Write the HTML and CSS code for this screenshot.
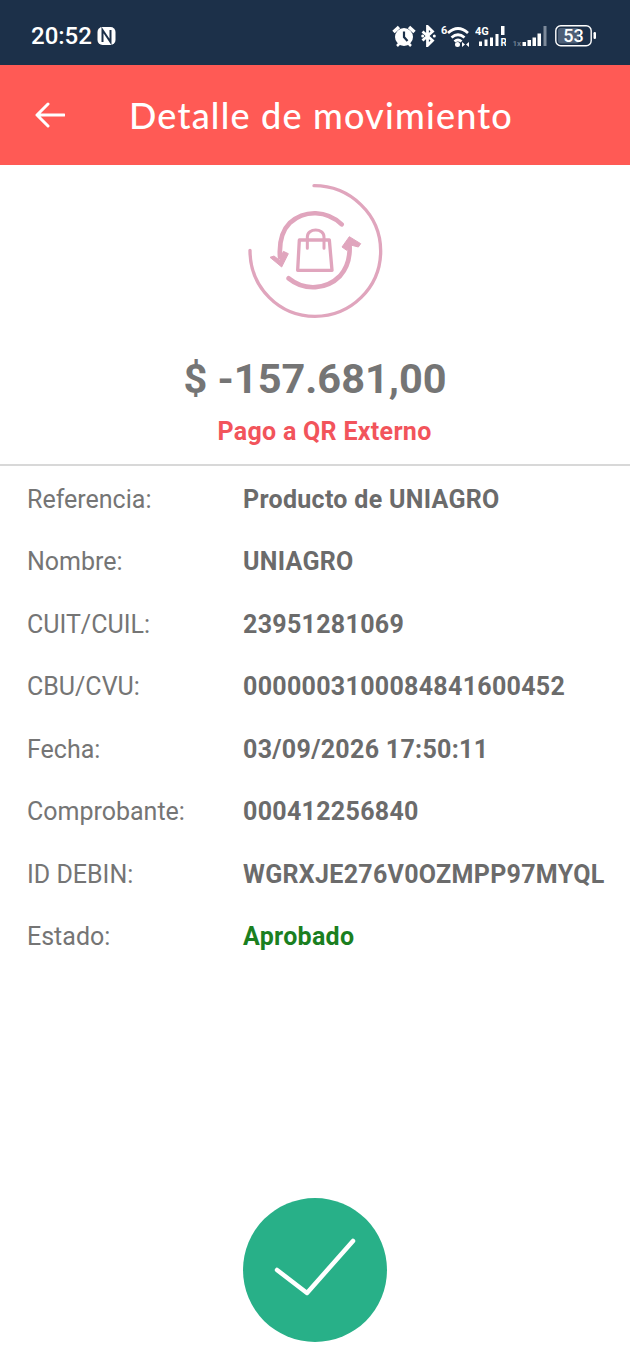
FILE: index.html
```html
<!DOCTYPE html>
<html lang="es">
<head>
  <meta charset="UTF-8">
  <meta name="viewport" content="width=device-width, initial-scale=1.0">
  <title>Detalle de movimiento</title>
  <link rel="stylesheet" href="styles.css">
</head>
<body>
  <div class="screen">
    <!-- Barra de estado -->
    <div class="status-bar">
      <div class="status-left">
        <span class="clock">20:52</span>
        <svg class="nfc" width="19" height="20" viewBox="0 0 19 20">
          <rect x="0.500" y="1" width="18" height="18" rx="5" fill="#fff"/>
          <path d="M5.500 16V4l8 12V4" fill="none" stroke="#1c3049" stroke-width="2"/>
        </svg>
      </div>
      <div class="status-right">
        <svg class="st-alarm" width="24" height="22" viewBox="0 0 24 22">
          <circle cx="12" cy="12" r="9" fill="#fff"/>
          <path d="M12 6.500V12l3.500 4" fill="none" stroke="#1c3049" stroke-width="2.200"/>
          <path d="M1.500 7l5.500-5M22.500 7l-5.500-5" stroke="#fff" stroke-width="3.500" fill="none"/>
          <path d="M5 21l2.500-2.500M19 21l-2.500-2.500" stroke="#fff" stroke-width="2.500" fill="none"/>
        </svg>
        <svg class="st-bt" width="15" height="22" viewBox="0 0 15 22">
          <path d="M1.500 6.500l10 9-5 5V1.500l5 5-10 9" fill="none" stroke="#fff" stroke-width="2.800"/>
          <circle cx="13.300" cy="11" r="1.500" fill="#fff"/>
          <circle cx="1.700" cy="11" r="1.500" fill="#fff"/>
        </svg>
        <svg class="st-wifi" width="29" height="22" viewBox="0 0 29 22">
          <text x="0" y="9" class="mini">6</text>
          <path d="M7 8q10-9 20 0M10.500 12.500q6.500-5.500 13 0M13.500 16.500q3.500-3 7 0" fill="none" stroke="#fff" stroke-width="2.800"/>
          <circle cx="16.500" cy="19.500" r="2.500" fill="#fff"/>
          <path d="M21 17l3 2.500-3 2.500zM28 17l-3 2.500 3 2.500z" fill="#fff"/>
        </svg>
        <svg class="st-4g" width="31" height="22" viewBox="0 0 31 22">
          <text x="0" y="10" class="mini">4G</text>
          <path d="M4 16.500h3V21H4zM9.500 14.500h3V21h-3zM15 12.500h3V21h-3zM20.500 9h3v12h-3zM26 1h3.500v9H26z" fill="#fff"/>
          <text x="25.500" y="21" class="mini small">R</text>
        </svg>
        <svg class="st-signal" width="35" height="22" viewBox="0 0 35 22">
          <text x="0.500" y="20.500" class="mini tiny dim">1x</text>
          <path d="M10.500 17H14v4h-3.500zM15.500 15H19v6h-3.500zM20.500 12.500H24V21h-3.500zM25.500 8.500H29V21h-3.500z" fill="#fff"/>
          <path d="M31.500 1h3v20h-3z" fill="#7d8a9b"/>
        </svg>
        <svg class="st-batt" width="42" height="22" viewBox="0 0 42 22">
          <rect x="0.800" y="0.800" width="35.400" height="20" rx="5" fill="none" stroke="#fff" stroke-width="1.400"/>
          <rect x="3" y="3" width="21" height="15.600" rx="2.500" fill="#4d5f77"/>
          <text x="18.500" y="17.300" text-anchor="middle" class="batt-num">53</text>
          <rect x="38.500" y="7" width="2.500" height="7" rx="1.200" fill="#fff"/>
        </svg>
      </div>
    </div>

    <!-- Cabecera -->
    <div class="top-bar">
      <svg class="back" width="30" height="28" viewBox="0 0 30 28">
        <path d="M29 14H2M13 3L2 14l11 11" fill="none" stroke="#fff" stroke-width="3" stroke-linecap="round" stroke-linejoin="round"/>
      </svg>
      <h1>Detalle de movimiento</h1>
    </div>

    <div class="summary">
      <svg class="mov-icon" width="170" height="160" viewBox="0 0 510 480">
        <g fill="none" stroke="#e0a5bd" stroke-linecap="round">
          <path d="M252 44C360 44 452 130 452 240 452 350 362 436 255 436 148 436 60 350 60 238" stroke-width="10"/>
          <path d="M335 160C290 118 225 115 180 155 155 180 147 215 150 258" stroke-width="14"/>
          <path d="M176 322C225 362 290 355 330 315 352 290 362 255 358 215" stroke-width="14"/>
          <path d="M208 207H298L306 298H203Z" stroke-width="10" stroke-linejoin="round"/>
          <path d="M232 232V198C232 170 282 170 282 198V232" stroke-width="9"/>
        </g>
        <path d="M120 259L132 255 149 268 160 241 175 248 155 288Z" fill="#e0a5bd" stroke="#e0a5bd" stroke-width="3" stroke-linejoin="round"/>
        <path d="M336 228L358 197 392 218 385 228 362 222 350 238Z" fill="#e0a5bd" stroke="#e0a5bd" stroke-width="3" stroke-linejoin="round"/>
      </svg>
      <div class="amount">$ -157.681,00</div>
      <div class="concept">Pago a QR Externo</div>
    </div>

    <div class="details">
      <div class="row"><span class="label">Referencia:</span><span class="value">Producto de UNIAGRO</span></div>
      <div class="row"><span class="label">Nombre:</span><span class="value">UNIAGRO</span></div>
      <div class="row"><span class="label">CUIT/CUIL:</span><span class="value">23951281069</span></div>
      <div class="row"><span class="label">CBU/CVU:</span><span class="value">0000003100084841600452</span></div>
      <div class="row"><span class="label">Fecha:</span><span class="value">03/09/2026 17:50:11</span></div>
      <div class="row"><span class="label">Comprobante:</span><span class="value">000412256840</span></div>
      <div class="row"><span class="label">ID DEBIN:</span><span class="value">WGRXJE276V0OZMPP97MYQL</span></div>
      <div class="row"><span class="label">Estado:</span><span class="value ok">Aprobado</span></div>
    </div>

    <div class="actions">
      <button class="done" aria-label="Aceptar">
        <svg width="144" height="144" viewBox="0 0 144 144">
          <path d="M34 72L64 95 110 43" fill="none" stroke="#fff" stroke-width="4.500" stroke-linecap="round" stroke-linejoin="round"/>
        </svg>
      </button>
    </div>
  </div>
</body>
</html>
```

FILE: styles.css
```css
* {
  box-sizing: border-box;
}

body {
  font-family: Roboto, "Noto Sans", sans-serif;
  background-color: #ffffff;
  margin: 0;
}

.screen {
  display: flex;
  flex-direction: column;
  height: 1360px;
  overflow: hidden;
}

.status-bar {
  display: flex;
  justify-content: space-between;
  align-items: center;
  height: 65px;
  padding: 10px 33px 3px 31px;
  background-color: #1c3049;
  color: #ffffff;
}

.status-left {
  display: flex;
  align-items: center;
  gap: 5px;
}

.clock {
  font-family: Roboto, sans-serif;
  font-size: 24px;
  font-weight: 500;
}

.status-right {
  display: flex;
  align-items: center;
}

.status-right svg {
  display: block;
  margin-left: 5px;
}

.status-right .st-signal {
  margin-left: 6px;
}

.status-right .st-batt {
  margin-left: 8px;
}

.mini {
  font-family: Roboto, sans-serif;
  font-size: 11px;
  font-weight: 700;
  fill: #ffffff;
}

.mini.small {
  font-size: 10px;
}

.mini.tiny {
  font-size: 8px;
}

.mini.dim {
  fill: #6d7c90;
}

.batt-num {
  font-family: Roboto, sans-serif;
  font-size: 18px;
  font-weight: 500;
  fill: #ffffff;
}

.top-bar {
  display: flex;
  align-items: center;
  height: 100px;
  padding-left: 35px;
  background-color: #ff5a55;
  color: #ffffff;
}

.top-bar h1 {
  margin: 0 0 0 64px;
  font-family: Lato, sans-serif;
  font-size: 36px;
  font-weight: 500;
  letter-spacing: 1.200px;
  white-space: nowrap;
}

.summary {
  display: flex;
  flex-direction: column;
  align-items: center;
  height: 301px;
  padding-top: 6px;
  border-bottom: 2px solid #d8d8d8;
}

.mov-icon {
  display: block;
}

.amount {
  margin-top: 23px;
  font-size: 41.500px;
  font-weight: 700;
  line-height: 50px;
  color: #757575;
}

.concept {
  margin-top: 13px;
  margin-left: 19px;
  font-size: 25px;
  font-weight: 700;
  letter-spacing: 0.300px;
  line-height: 30px;
  color: #f2545b;
}

.details {
  padding: 2px 0 0 27px;
}

.row {
  display: flex;
  align-items: center;
  height: 62.500px;
  font-size: 25px;
  white-space: nowrap;
}

.label {
  width: 216px;
  color: #757575;
}

.value {
  font-weight: 700;
  letter-spacing: 0.300px;
  color: #6b6b6b;
}

.value.ok {
  color: #1b7f1f;
}

.actions {
  display: flex;
  justify-content: center;
  margin-top: auto;
  padding-bottom: 18px;
}

.done {
  width: 144px;
  height: 144px;
  padding: 0;
  border: none;
  border-radius: 50%;
  background-color: #28b088;
  cursor: pointer;
}

.done svg {
  display: block;
}
```
